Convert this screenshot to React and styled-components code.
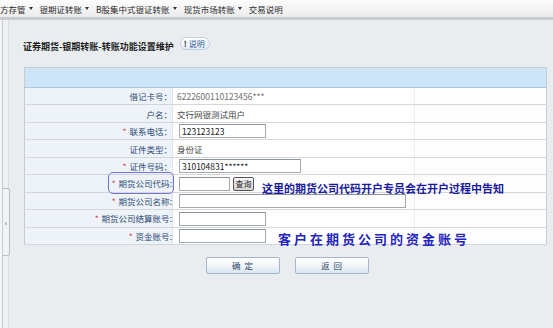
import React from 'react';
import styled, { createGlobalStyle } from 'styled-components';

const GlobalStyle = createGlobalStyle`
  html, body { margin: 0; padding: 0; }
  body {
    background: #e9edf0;
    font-family: "Noto Sans CJK SC", "Noto Sans", sans-serif;
  }
`;

const Page = styled.div`
  width: 553px;
  height: 328px;
  overflow: hidden;
  display: flex;
  flex-direction: column;
  background: #e9edf0;
`;

const NavBar = styled.div`
  flex: none;
  height: 17px;
  display: flex;
  align-items: center;
  gap: 7px;
  background: linear-gradient(#fdfdfd, #ebebeb);
  border-bottom: 3px solid #c9cbcd;
  font-size: 8.5px;
  color: #2a2a2a;
  white-space: nowrap;
`;

const NavItem = styled.span`
  display: inline-flex;
  align-items: center;
  gap: 3px;
`;

const Caret = () => (
  <svg width="4" height="3" viewBox="0 0 4 3">
    <path d="M0 0 L4 0 L2 3 Z" fill="#333" />
  </svg>
);

const Body = styled.div`
  flex: 1;
  display: flex;
`;

const LeftStrip = styled.div`
  flex: none;
  width: 8px;
  background: linear-gradient(to right, #f4f5f6 0 2px, #c8ccd0 2px 3px, #eef0f2 3px);
  border-right: 1px solid #d9dde0;
  display: flex;
  flex-direction: column;
`;

const Handle = styled.div`
  margin-top: 168px;
  margin-left: 3px;
  width: 6px;
  height: 66px;
  border: 1px solid #b7bcc1;
  border-left: none;
  border-radius: 0 3px 3px 0;
  background: #f2f3f4;
  display: flex;
  align-items: center;
  justify-content: center;
  font-size: 8px;
  color: #555;
`;

const Content = styled.div`
  flex: 1;
  padding: 17px 0 0 15px;
  display: flex;
  flex-direction: column;
`;

const TitleRow = styled.div`
  display: flex;
  align-items: flex-start;
  height: 16px;
  margin-left: -1px;
`;

const Title = styled.div`
  margin-top: 4px;
  font-size: 9px;
  line-height: 12px;
  font-weight: bold;
  color: #1c1c1c;
`;

const HelpPill = styled.span`
  margin-left: 6px;
  height: 13px;
  box-sizing: border-box;
  padding: 0 4px 0 3px;
  border: 1px solid #bfcedc;
  border-radius: 7px;
  background: linear-gradient(#ffffff, #e4edf6);
  display: inline-flex;
  align-items: center;
  gap: 2px;
  font-size: 8px;
  color: #2b5c9a;
`;

const Bang = styled.b`
  color: #333;
  font-size: 8px;
`;

const TableWrap = styled.div`
  position: relative;
  margin-top: 14px;
  width: 522px;
`;

const Table = styled.table`
  width: 522px;
  border-collapse: collapse;
  table-layout: fixed;
  border: 1px solid #c5ccd3;
  font-size: 8.5px;
`;

const HeadCell = styled.td`
  height: 19px;
  padding: 0;
  background: #cde5f6;
  border-bottom: 1px solid #afc8dc;
`;

const Row = styled.tr`
  height: 17.45px;
`;

const LabelCell = styled.td`
  padding: 0;
  text-align: right;
  background: #edf3f9;
  color: #2f4b76;
  border-bottom: 1px solid #d3d7db;
  border-right: 1px solid #dfe3e7;
  white-space: nowrap;
`;

const ValueCell = styled.td`
  padding: 0 0 0 4px;
  background: #ffffff;
  color: ${p => (p.$muted ? '#707070' : '#444')};
  border-bottom: 1px solid #d3d7db;
  border-right: 1px solid #eceef0;
  white-space: nowrap;
`;

const ExtraCell = styled.td`
  padding: 0;
  background: #fdfdfd;
  border-bottom: 1px solid #d3d7db;
`;

const Req = styled.span`
  color: #d9474f;
  margin-right: 3px;
`;

const Highlight = styled.span`
  position: relative;
  &::after {
    content: '';
    position: absolute;
    left: -4px;
    right: -2px;
    top: -5px;
    bottom: -5px;
    border: 1px solid #7674d2;
    border-radius: 5px;
  }
`;

const Field = styled.input`
  box-sizing: border-box;
  margin: 0 0 0 2px;
  width: ${p => p.$w}px;
  height: 14px;
  padding: 0 2px;
  border: 1px solid #a3aab0;
  border-top-color: #8c949b;
  background: #fff;
  font-family: inherit;
  font-size: 8.5px;
  color: #222;
  vertical-align: middle;
  outline: none;
`;

const QueryButton = styled.button`
  box-sizing: border-box;
  margin-left: 3px;
  width: 21px;
  height: 14px;
  padding: 0;
  border: 1px solid #555;
  border-radius: 2px;
  background: linear-gradient(#f6f6f6, #d6d6d6);
  font-family: inherit;
  font-size: 8px;
  color: #222;
  vertical-align: middle;
`;

const Note = styled.div`
  position: absolute;
  left: ${p => p.$x}px;
  top: ${p => p.$y}px;
  font-size: ${p => p.$size}px;
  line-height: ${p => p.$size + 3}px;
  letter-spacing: ${p => p.$spacing || 0}px;
  font-weight: bold;
  color: ${p => p.$color};
  white-space: nowrap;
`;

const ButtonRow = styled.div`
  margin-top: 12px;
  width: 522px;
  display: flex;
  gap: 15px;
  padding-left: 182px;
  box-sizing: border-box;
`;

const ActionButton = styled.button`
  box-sizing: border-box;
  width: 74px;
  height: 17px;
  padding: 0;
  border: 1px solid #a6b6c6;
  border-radius: 2px;
  background: linear-gradient(#ffffff 0%, #f3f7fb 45%, #d9e6f2 100%);
  font-family: inherit;
  font-size: 8.5px;
  color: #2d4466;
  letter-spacing: 1px;
`;

const rows = [
  { label: '借记卡号', colon: '：', value: '6222600110123456***', muted: true },
  { label: '户名', colon: '：', value: '交行网银测试用户' },
  { label: '联系电话', colon: '：', req: true, input: 87, text: '123123123' },
  { label: '证件类型', colon: '：', value: '身份证' },
  { label: '证件号码', colon: '：', req: true, input: 122, text: '310104831******' },
  { label: '期货公司代码', colon: ':', req: true, input: 51, query: true, highlight: true },
  { label: '期货公司名称', colon: ':', req: true, input: 227 },
  { label: '期货公司结算账号', colon: ':', req: true, input: 87 },
  { label: '资金账号', colon: ':', req: true, input: 87 },
];

export default function App() {
  return (
    <>
      <GlobalStyle />
      <Page>
        <NavBar>
          <NavItem>方存管<Caret /></NavItem>
          <NavItem>银期证转账<Caret /></NavItem>
          <NavItem>B股集中式银证转账<Caret /></NavItem>
          <NavItem>现货市场转账<Caret /></NavItem>
          <NavItem>交易说明</NavItem>
        </NavBar>
        <Body>
          <LeftStrip>
            <Handle>‹</Handle>
          </LeftStrip>
          <Content>
            <TitleRow>
              <Title>证券期货-银期转账-转账功能设置维护</Title>
              <HelpPill><Bang>!</Bang>说明</HelpPill>
            </TitleRow>
            <TableWrap>
              <Table>
                <colgroup>
                  <col style={{ width: 148 }} />
                  <col style={{ width: 242 }} />
                  <col style={{ width: 132 }} />
                </colgroup>
                <tbody>
                  <tr><HeadCell colSpan={3} /></tr>
                  {rows.map(r => {
                    const labelText = (
                      <>
                        {r.req && <Req>*</Req>}
                        {r.label}{r.colon}
                      </>
                    );
                    return (
                      <Row key={r.label}>
                        <LabelCell>
                          {r.highlight ? <Highlight>{labelText}</Highlight> : labelText}
                        </LabelCell>
                        <ValueCell $muted={r.muted}>
                          {r.input ? (
                            <>
                              <Field $w={r.input} defaultValue={r.text || ''} />
                              {r.query && <QueryButton>查询</QueryButton>}
                            </>
                          ) : (
                            r.value
                          )}
                        </ValueCell>
                        <ExtraCell />
                      </Row>
                    );
                  })}
                </tbody>
              </Table>
              <Note $x={238} $y={114} $size={11} $color="#1a1a9e">
                这里的期货公司代码开户专员会在开户过程中告知
              </Note>
              <Note $x={254} $y={164} $size={13} $spacing={3} $color="#2424c0">
                客户在期货公司的资金账号
              </Note>
            </TableWrap>
            <ButtonRow>
              <ActionButton>确 定</ActionButton>
              <ActionButton>返 回</ActionButton>
            </ButtonRow>
          </Content>
        </Body>
      </Page>
    </>
  );
}
